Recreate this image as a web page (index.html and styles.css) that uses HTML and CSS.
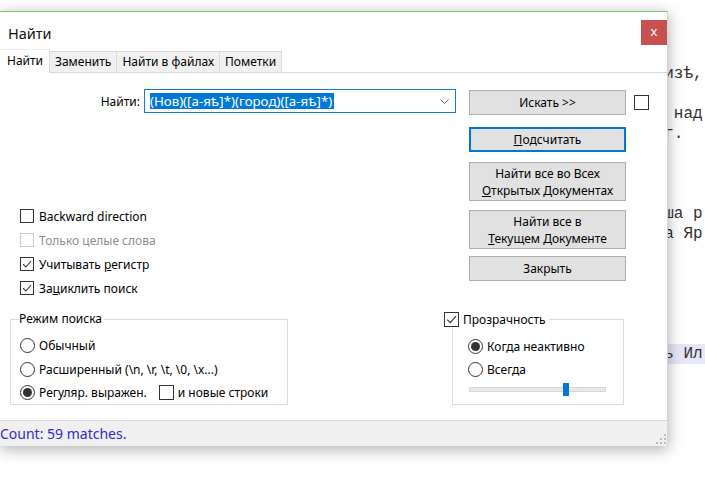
FILE: index.html
```html
<!DOCTYPE html>
<html lang="ru">
<head>
<meta charset="utf-8">
<title>Найти</title>
<link rel="stylesheet" href="styles.css">
</head>
<body>
<div class="editor">
  <div class="ln">риизѣ,</div>
  <div class="ln">&nbsp;</div>
  <div class="ln">ит над</div>
  <div class="ln">одг.</div>
  <div class="ln">&nbsp;</div>
  <div class="ln">&nbsp;</div>
  <div class="ln">&nbsp;</div>
  <div class="ln">ьшша р</div>
  <div class="ln">ома Яр</div>
  <div class="ln">&nbsp;</div>
  <div class="ln">&nbsp;</div>
  <div class="ln">&nbsp;</div>
  <div class="ln">&nbsp;</div>
  <div class="ln">&nbsp;</div>
  <div class="ln hl">оль Ил</div>
</div>

<div class="dialog">
  <div class="titlebar">
    <span class="title">Найти</span>
    <div class="close">x</div>
  </div>

  <div class="tabs">
    <div class="tab active">Найти</div>
    <div class="tab">Заменить</div>
    <div class="tab">Найти в файлах</div>
    <div class="tab">Пометки</div>
  </div>

  <div class="content">
    <div class="top">
      <div class="left">
        <div class="findrow">
          <label class="findlabel">Найти:</label>
          <div class="combo">
            <span class="sel">(Нов)([а-яѣ]*)(город)([а-яѣ]*)</span>
            <svg class="chev" width="9" height="5" viewBox="0 0 9 5"><path d="M0.5 0.5 L4.5 4.5 L8.5 0.5" fill="none" stroke="#606060" stroke-width="1"/></svg>
          </div>
        </div>
        <div class="checks">
          <div class="chk"><span class="box"></span><span>Backward direction</span></div>
          <div class="chk disabled"><span class="box"></span><span>Только целые слова</span></div>
          <div class="chk"><span class="box"><svg width="12" height="12" viewBox="0 0 12 12"><path d="M2 6.2 L4.8 9 L10.2 3" fill="none" stroke="#333" stroke-width="1.1"/></svg></span><span>Учитывать <u>р</u>егистр</span></div>
          <div class="chk"><span class="box"><svg width="12" height="12" viewBox="0 0 12 12"><path d="M2 6.2 L4.8 9 L10.2 3" fill="none" stroke="#333" stroke-width="1.1"/></svg></span><span>За<u>ц</u>иклить поиск</span></div>
        </div>
      </div>

      <div class="right">
        <div class="btnrow">
          <button class="btn">Искать &gt;&gt;</button>
          <span class="box big"></span>
        </div>
        <button class="btn focus b2"><u>П</u>одсчитать</button>
        <button class="btn tall b3">Найти все во Всех<br><u>О</u>ткрытых Документах</button>
        <button class="btn tall b4">Найти все в<br><u>Т</u>екущем Документе</button>
        <button class="btn b5">Закрыть</button>
      </div>
    </div>

    <div class="bottom">
      <fieldset class="group mode">
        <legend class="lg">Режим поиска</legend>
        <div class="rrow first"><span class="radio"></span><span>Обычный</span></div>
        <div class="rrow"><span class="radio"></span><span>Расширенный (\n, \r, \t, \0, \x...)</span></div>
        <div class="rrow"><span class="radio on"></span><span>Регуляр. выражен.</span><span class="box big nl"></span><span>и новые строки</span></div>
      </fieldset>

      <fieldset class="group trans">
        <legend class="lg lgchk"><span class="box big"><svg width="13" height="13" viewBox="0 0 13 13"><path d="M2.2 6.6 L5.2 9.6 L11 3.2" fill="none" stroke="#333" stroke-width="1.1"/></svg></span><span>Прозрачность</span></legend>
        <div class="rrow first"><span class="radio on"></span><span>Когда неактивно</span></div>
        <div class="rrow"><span class="radio"></span><span>Всегда</span></div>
        <div class="slider">
          <div class="track"></div>
          <div class="thumb" style="left:94px"></div>
        </div>
      </fieldset>
    </div>
  </div>

  <div class="status">
    <span class="count">Count: 59 matches.</span>
    <svg class="grip" width="12" height="12" viewBox="0 0 12 12">
      <rect x="9" y="1" width="2" height="2" fill="#bdbdbd"/>
      <rect x="5" y="5" width="2" height="2" fill="#bdbdbd"/>
      <rect x="9" y="5" width="2" height="2" fill="#bdbdbd"/>
      <rect x="1" y="9" width="2" height="2" fill="#bdbdbd"/>
      <rect x="5" y="9" width="2" height="2" fill="#bdbdbd"/>
      <rect x="9" y="9" width="2" height="2" fill="#bdbdbd"/>
    </svg>
  </div>
</div>
</body>
</html>
```

FILE: styles.css
```css
* { box-sizing: border-box; }
html, body { margin: 0; padding: 0; }
body {
  width: 705px;
  height: 477px;
  overflow: hidden;
  position: relative;
  background: #fff;
  font-family: "Noto Sans", sans-serif;
  font-size: 12px;
  color: #000;
}

/* editor behind the dialog */
.editor {
  font-family: "Liberation Mono", monospace;
  font-size: 16px;
  line-height: 20px;
  color: #333;
  padding: 64px 0 0 645px;
}
.editor .ln { white-space: pre; height: 20px; }
.editor .hl { background: #e6e6f8; }

/* dialog window */
.dialog {
  position: absolute;
  left: 0;
  top: 11px;
  width: 668px;
  height: 435px;
  background: #fff;
  border-top: 1px solid #74cc74;
  border-right: 1px solid #d4d4d4;
  box-shadow: 0 3px 14px rgba(0, 0, 0, 0.33);
  display: flex;
  flex-direction: column;
}

.titlebar {
  height: 37px;
  display: flex;
  justify-content: space-between;
  align-items: flex-start;
  flex: none;
}
.title {
  font-size: 14.5px;
  line-height: 20px;
  padding: 11px 0 0 8px;
  color: #111;
}
.close {
  width: 26px;
  height: 25px;
  margin: 8px 0 0 0;
  background: #c75050;
  color: #fff;
  font-size: 13px;
  line-height: 1;
  display: flex;
  align-items: center;
  justify-content: center;
  padding-bottom: 2px;
}

/* tabs */
.tabs {
  height: 24px;
  flex: none;
  display: flex;
  align-items: flex-end;
  background: linear-gradient(#d9d9d9, #d9d9d9) left bottom / 100% 1px no-repeat;
}
.tab {
  height: 22px;
  line-height: 20px;
  padding: 0 5px;
  background: #f0f0f0;
  border: 1px solid #d9d9d9;
  border-left: none;
  white-space: nowrap;
}
.tab.active {
  height: 24px;
  line-height: 22px;
  width: 50px;
  padding: 0 0 0 7px;
  background: #fff;
  border-bottom: none;
  border-top: 1px solid #ececec;
}

/* content */
.content {
  flex: 1;
  display: flex;
  flex-direction: column;
}
.top {
  display: flex;
  height: 227px;
}
.left { width: 469px; }

.findrow {
  display: flex;
  align-items: center;
  margin-top: 16px;
  height: 24px;
}
.findlabel {
  width: 140px;
  text-align: right;
  margin-right: 4px;
  font-size: 12px;
}
.combo {
  width: 312px;
  height: 24px;
  border: 1px solid #1979ca;
  display: flex;
  align-items: center;
  padding: 0 6px 0 5px;
}
.sel {
  background: #0078d7;
  color: #fff;
  font-size: 13.3px;
  line-height: 16px;
  white-space: nowrap;
  padding-right: 2px;
}
.chev { margin-left: auto; }

.checks { margin-top: 91px; }
.chk {
  height: 24px;
  display: flex;
  align-items: center;
  gap: 5px;
  padding-left: 20px;
}
.chk.disabled { color: #8d8d8d; }
.chk.disabled .box { border-color: #cccccc; }

.box {
  width: 14px;
  height: 14px;
  border: 1px solid #333;
  background: #fff;
  display: inline-flex;
  align-items: center;
  justify-content: center;
  flex: none;
}
.box.big { width: 15px; height: 15px; }

.right {
  display: flex;
  flex-direction: column;
  align-items: flex-start;
}
.btnrow {
  display: flex;
  align-items: center;
  gap: 8px;
  margin-top: 17px;
}
.btn {
  width: 157px;
  height: 25px;
  background: #e1e1e1;
  border: 1px solid #adadad;
  font-family: "Noto Sans", sans-serif;
  font-size: 12px;
  line-height: 17px;
  color: #000;
  padding: 0;
  text-align: center;
}
.btn.focus { border: 2px solid #0078d7; }
.btn.tall { height: 39px; }
.b2 { margin-top: 12px; }
.b3 { margin-top: 10px; }
.b4 { margin-top: 9px; }
.b5 { margin-top: 7px; }

/* group boxes */
.bottom {
  display: flex;
  align-items: flex-start;
  margin-top: 12px;
}
.group {
  margin: 0;
  border: 1px solid #dcdcdc;
  min-width: 0;
  height: 93px;
  padding: 0;
}
.group.mode {
  margin-left: 10px;
  width: 278px;
  padding-left: 9px;
}
.group.trans {
  margin-left: 164px;
  width: 172px;
  padding-left: 15px;
}
.lg {
  padding: 0 2px 0 0;
  margin-left: -1px;
  line-height: 14px;
  font-size: 12px;
}
.lgchk {
  display: flex;
  align-items: center;
  gap: 4px;
  margin-left: -24px;
  padding-right: 3px;
  height: 15px;
}

.rrow {
  height: 23.5px;
  display: flex;
  align-items: center;
  gap: 4px;
}
.rrow.first { margin-top: 8px; }
.trans .rrow.first { margin-top: 7.5px; }
.radio {
  width: 15px;
  height: 15px;
  border: 1px solid #333;
  border-radius: 50%;
  background: #fff;
  display: inline-flex;
  align-items: center;
  justify-content: center;
  flex: none;
}
.radio.on::after {
  content: "";
  width: 9px;
  height: 9px;
  border-radius: 50%;
  background: #333;
}
.nl { margin-left: 8px; }

.slider {
  position: relative;
  width: 137px;
  height: 13px;
  margin: 1.5px 0 0 1px;
}
.track {
  position: absolute;
  left: 0;
  right: 0;
  top: 4px;
  height: 5px;
  background: #e7e7e7;
  border: 1px solid #d6d6d6;
}
.thumb {
  position: absolute;
  top: 0;
  width: 6px;
  height: 13px;
  background: #0078d7;
}

/* status bar */
.status {
  height: 26px;
  flex: none;
  background: #f0f0f0;
  border-top: 1px solid #dadada;
  display: flex;
  align-items: center;
  justify-content: space-between;
}
.count {
  font-size: 14px;
  color: #2d2dcc;
  padding-bottom: 1px;
}
.grip {
  align-self: flex-end;
  margin: 0 0 1px 0;
}
```
